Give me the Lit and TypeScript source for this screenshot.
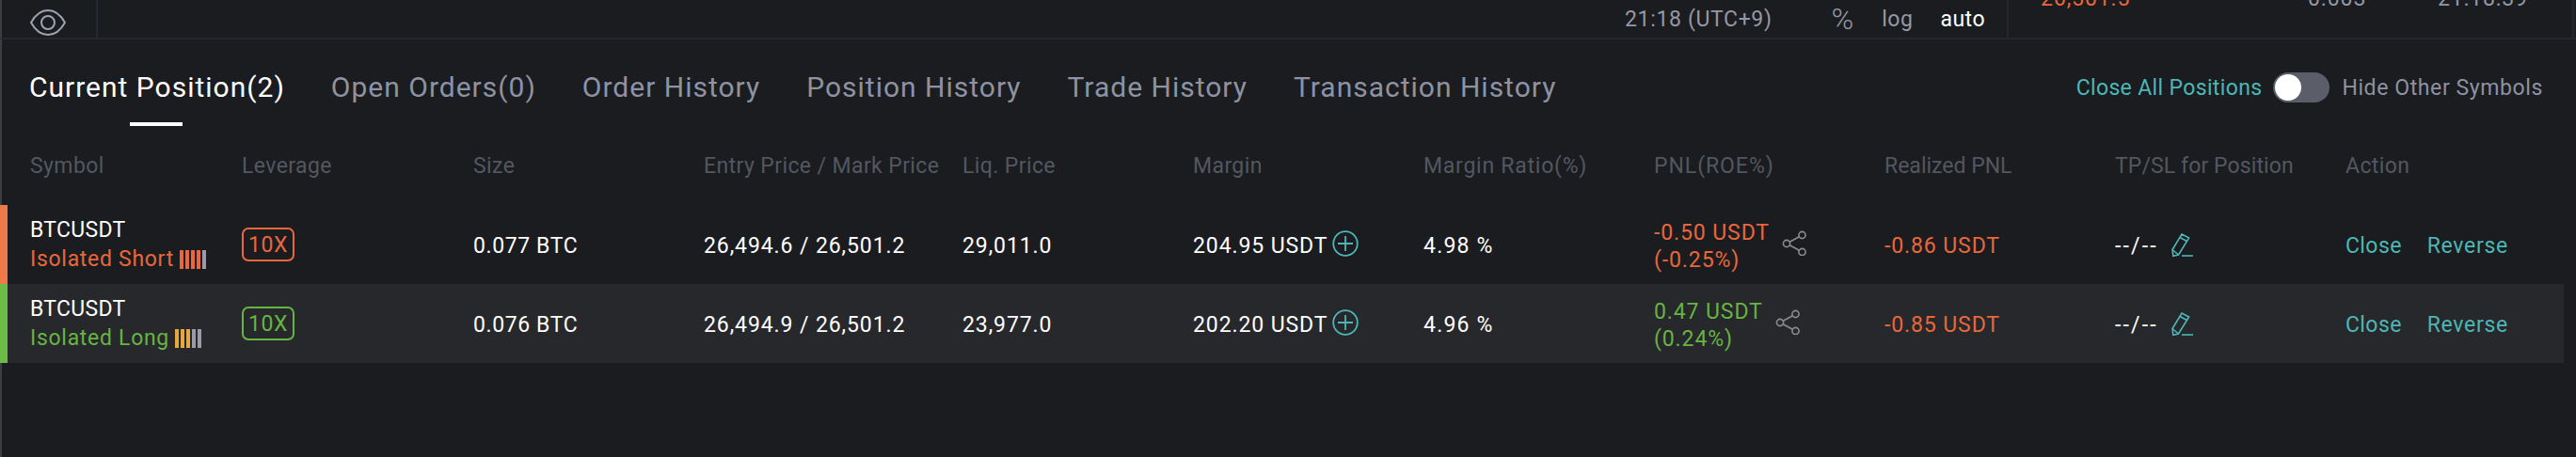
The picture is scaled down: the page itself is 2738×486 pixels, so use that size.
import { LitElement, html, css } from "lit";
import { customElement } from "lit/decorators.js";

const eye = html`<svg class="eye" viewBox="0 0 38 28" fill="none" stroke="#a0a3ae" stroke-width="2"><path d="M1 14C6 5 12 1 19 1s13 4 18 13c-5 9-11 13-18 13S6 23 1 14Z"/><circle cx="19" cy="14" r="7"/></svg>`;
const plus = html`<svg class="plus" viewBox="0 0 28 28" fill="none" stroke="#4db6b6" stroke-width="1.8"><circle cx="14" cy="14" r="12.800"/><path d="M6 14h16M14 6v16"/></svg>`;
const share = html`<svg class="share" viewBox="0 0 27 27" fill="none" stroke="#8c8c8c" stroke-width="1.6"><circle cx="5" cy="14" r="3.600"/><circle cx="21.500" cy="5" r="3.600"/><circle cx="21.500" cy="23" r="3.600"/><path d="M8.200 12.200 18.400 6.800M8.200 15.800l10.200 5.400"/></svg>`;
const pencil = html`<svg class="pencil" viewBox="0 0 24 26" fill="none" stroke="#4db6b6" stroke-width="1.6"><path d="M11 1l7.600 4L7.500 23 1.800 24.300 1 17.500Z"/><path d="M9 4.500l7.400 4M1 17.500l6.500 5.500"/><path d="M11 24h12"/></svg>`;

type Row = {
  kind: "short" | "long"; side: string; size: string; prices: string; liq: string; margin: string;
  ratio: string; pnl: string; roe: string; realized: string; lit: number;
};
const rows: Row[] = [
  { kind: "short", side: "Isolated Short", size: "0.077 BTC", prices: "26,494.6 / 26,501.2", liq: "29,011.0", margin: "204.95 USDT", ratio: "4.98 %", pnl: "-0.50 USDT", roe: "(-0.25%)", realized: "-0.86 USDT", lit: 4 },
  { kind: "long", side: "Isolated Long", size: "0.076 BTC", prices: "26,494.9 / 26,501.2", liq: "23,977.0", margin: "202.20 USDT", ratio: "4.96 %", pnl: "0.47 USDT", roe: "(0.24%)", realized: "-0.85 USDT", lit: 3 },
];
const heads = ["Symbol", "Leverage", "Size", "Entry Price / Mark Price", "Liq. Price", "Margin", "Margin Ratio(%)", "PNL(ROE%)", "Realized PNL", "TP/SL for Position", "Action"];
const tabs = ["Current Position(2)", "Open Orders(0)", "Order History", "Position History", "Trade History", "Transaction History"];

@customElement("app-root")
export class AppRoot extends LitElement {
  static styles = css`
    :host { display: block; width: 2738px; height: 486px; overflow: hidden; background: #1a1c20; font-family: Roboto, "Noto Sans", sans-serif; color: #fff; font-size: 23px; letter-spacing: 0.9px; }
    * { box-sizing: border-box; }
    .top { height: 42px; border-bottom: 2px solid #25272c; border-left: 2px solid #3c3e44; display: flex; overflow: hidden; }
    .eyebox { width: 102px; border-right: 2px solid #232a36; padding: 10px 0 0 30px; flex: none; }
    .eye { width: 38px; height: 28px; display: block; }
    .tools { flex: none; width: 2031px; border-right: 2px solid #25272c; display: flex; justify-content: flex-end; align-items: center; padding-right: 23px; color: #9598a4; }
    .tz { margin-right: 63px; letter-spacing: 0.65px; }
    .pct { margin-right: 30px; font-size: 32px; font-weight: 300; letter-spacing: 0; }
    .log { margin-right: 29px; letter-spacing: 0.5px; }
    .auto { color: #fff; letter-spacing: 0.5px; }
    .ticker { width: 601px; height: 40px; border-right: 2px solid #25272c; flex: none; color: #9598a4; overflow: hidden; }
    .tick { display: flex; height: 13px; align-items: flex-end; }
    .tick span { flex: none; line-height: 28px; }
    .ask { color: #e9673a; margin-left: 34px; width: 284px; }
    .qty { width: 138px; }
    .tabs { display: flex; justify-content: space-between; padding: 32px 35px 0 29px; height: 92px; border-left: 2px solid #3c3e44; }
    .tablist { display: flex; gap: 49px; font-size: 30px; letter-spacing: 1px; color: #8e92a2; }
    .tab { position: relative; height: 38px; line-height: 38px; }
    .tab.on { color: #fff; }
    .tab.on::after { content: ""; position: absolute; left: 107px; top: 56px; width: 56px; height: 4px; background: #fff; }
    .side { display: flex; align-items: center; height: 38px; }
    .closeall { color: #4db6b6; letter-spacing: 0.35px; }
    .toggle { width: 60px; height: 32px; border-radius: 16px; background: #5b5e69; margin: 0 13px 0 12px; padding: 2px; }
    .knob { width: 28px; height: 28px; border-radius: 50%; background: #fff; }
    .hide { color: #8e92a2; letter-spacing: 0.6px; }
    .grid { display: grid; grid-template-columns: 257px 246px 245px 275px 245px 245px 245px 245px 245px 245px 232px; width: 2725px; }
    .head { height: 84px; align-items: center; display: grid; grid-template-columns: subgrid; grid-column: 1 / -1; color: #53575f; border-left: 2px solid #3c3e44; letter-spacing: 0.4px; }
    .head > div:first-child { padding-left: 30px; }
    .head > div:nth-child(7) { letter-spacing: 0.75px; }
    .head > div:nth-child(8) { letter-spacing: 0.95px; }
    .head > div:nth-child(9) { letter-spacing: 0; }
    .head > div:nth-child(10) { letter-spacing: 0.1px; }
    .row { height: 84px; padding-top: 3px; display: grid; grid-template-columns: subgrid; grid-column: 1 / -1; align-items: center; border-left: 8px solid; }
    .row > div:first-child { padding-left: 24px; }
    .row.short { border-color: #ee7a4a; --c: #e9673a; --b: #e9673a; }
    .row.long { border-color: #6dbb47; --c: #67b441; --b: #e5a83f; background: #26282c; }
    .sym { line-height: 31px; margin-top: -3px; }
    .pair { letter-spacing: 0.3px; }
    .sideline { display: flex; align-items: center; color: var(--c); gap: 6px; letter-spacing: 0.7px; }
    .bars { display: flex; gap: 2px; height: 20px; }
    .bar { width: 4px; background: #9a9aa8; }
    .bar.lit { background: var(--b); }
    .lev { width: 56px; height: 36px; margin-top: -3px; border: 2px solid var(--c); border-radius: 7px; color: var(--c); display: flex; align-items: center; justify-content: center; letter-spacing: 0.6px; }
    .size { letter-spacing: 0.6px; }
    .ratio { letter-spacing: 1.2px; }
    .cellflex { display: flex; align-items: center; }
    .plus { width: 28px; height: 28px; margin-left: 5px; margin-top: -6px; }
    .pnl { color: var(--c); line-height: 29px; }
    .share { width: 27px; height: 27px; margin-left: 13px; margin-top: -6px; }
    .neg { color: #e9673a; }
    .dash { letter-spacing: 2.2px; }
    .pencil { width: 24px; height: 26px; margin-left: 14px; margin-top: -2px; }
    .act { color: #4db6b6; gap: 27px; }
    .close { letter-spacing: 0.4px; }
    .rev { letter-spacing: 0.7px; }
    .rest { height: 100px; border-left: 2px solid #3c3e44; }
  `;

  render() {
    return html`
      <div class="top">
        <div class="eyebox">${eye}</div>
        <div class="tools">
          <span class="tz">21:18 (UTC+9)</span><span class="pct">%</span><span class="log">log</span><span class="auto">auto</span>
        </div>
        <div class="ticker"><div class="tick"><span class="ask">26,501.5</span><span class="qty">0.003</span><span>21:18:39</span></div></div>
      </div>
      <div class="tabs">
        <div class="tablist">${tabs.map((t, i) => html`<div class="tab ${i === 0 ? "on" : ""}">${t}</div>`)}</div>
        <div class="side"><span class="closeall">Close All Positions</span><div class="toggle"><div class="knob"></div></div><span class="hide">Hide Other Symbols</span></div>
      </div>
      <div class="grid">
        <div class="head">${heads.map((h) => html`<div>${h}</div>`)}</div>
        ${rows.map((r) => html`
          <div class="row ${r.kind}">
            <div class="sym"><div class="pair">BTCUSDT</div><div class="sideline">${r.side}<span class="bars">${[0, 1, 2, 3, 4].map((i) => html`<span class="bar ${i < r.lit ? "lit" : ""}"></span>`)}</span></div></div>
            <div><div class="lev">10X</div></div>
            <div class="size">${r.size}</div>
            <div>${r.prices}</div>
            <div>${r.liq}</div>
            <div class="cellflex">${r.margin}${plus}</div>
            <div class="ratio">${r.ratio}</div>
            <div class="cellflex"><div class="pnl"><div>${r.pnl}</div><div>${r.roe}</div></div>${share}</div>
            <div class="neg">${r.realized}</div>
            <div class="cellflex"><span class="dash">--/--</span>${pencil}</div>
            <div class="cellflex act"><span class="close">Close</span><span class="rev">Reverse</span></div>
          </div>`)}
      </div>
      <div class="rest"></div>
    `;
  }
}
